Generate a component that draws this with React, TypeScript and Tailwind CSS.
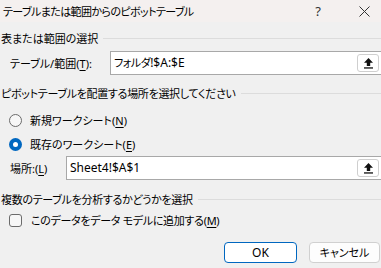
import React from 'react';

const FONT = "[font-family:'Noto_Sans','Noto_Sans_CJK_JP',sans-serif] [font-feature-settings:'palt']";

/** Up-arrow "collapse dialog" button that sits at the right end of a range box */
function RangeButton() {
  return (
    <div className="flex h-[18px] w-[22px] items-center justify-center rounded-[3px] border border-[#cfcfcf] bg-white">
      <svg width="11" height="12" viewBox="0 0 11 12">
        <path d="M5.5 1 L10 5.8 H7.2 V9 H3.8 V5.8 H1 Z" fill="#111" />
        <rect x="1" y="10.3" width="9" height="1.3" fill="#111" />
      </svg>
    </div>
  );
}

function RangeInput({ children }: { children: React.ReactNode }) {
  return (
    <div className="-mr-[4px] flex h-[24px] flex-1 items-center border border-[#a8a8a8] bg-white pl-[3px] pr-[5px]">
      <span className="flex-1 text-[12px] leading-none text-black">{children}</span>
      <RangeButton />
    </div>
  );
}

function SectionHeader({ children, tight }: { children: React.ReactNode; tight?: boolean }) {
  return (
    <div className="flex h-[16px] items-center">
      <span className={`pl-[1px] text-[11px] leading-none text-black ${tight ? 'tracking-[-0.3px]' : ''}`}>
        {children}
      </span>
      <div className="ml-[5px] h-px flex-1 bg-[#dcdcdc]" />
    </div>
  );
}

function Radio({ checked }: { checked?: boolean }) {
  if (checked) {
    return (
      <div className="flex h-[13px] w-[13px] items-center justify-center rounded-full bg-[#0067c0]">
        <div className="h-[5px] w-[5px] rounded-full bg-white" />
      </div>
    );
  }
  return <div className="h-[13px] w-[13px] rounded-full border border-[#6b6b6b] bg-[#f7f7f7]" />;
}

export default function App() {
  return (
    <div className={`h-[268px] w-[381px] overflow-hidden bg-[#f0f0f0] text-black ${FONT}`}>
      {/* Title bar */}
      <div className="flex h-[22px] items-center bg-[#f4f0ef] pl-[3px]">
        <span className="flex-1 text-[11px] leading-none tracking-[-0.6px] text-black">
          テーブルまたは範囲からのピボットテーブル
        </span>
        <span className="mr-[38px] text-[13px] leading-none text-[#333]">?</span>
        <svg width="11" height="11" viewBox="0 0 11 11" className="mr-[11px]">
          <path d="M0.5 0.5 L10.5 10.5 M10.5 0.5 L0.5 10.5" stroke="#333" strokeWidth="1" />
        </svg>
      </div>

      {/* Section 1 */}
      <div className="mt-[8px]">
        <SectionHeader>表または範囲の選択</SectionHeader>
      </div>
      <div className="mt-[5px] flex items-center pl-[10px]">
        <span className="w-[100px] text-[11px] leading-none">
          テーブル/範囲(<span className="underline underline-offset-2">T</span>):
        </span>
        <RangeInput>
          <span className="text-[11px] tracking-[-0.5px]">フォルダ</span>!$A:$E
        </RangeInput>
      </div>

      {/* Section 2 */}
      <div className="mt-[10px]">
        <SectionHeader tight>ピボットテーブルを配置する場所を選択してください</SectionHeader>
      </div>
      <div className="mt-[11px] flex h-[16px] items-center gap-[8px] pl-[9px]">
        <Radio />
        <span className="text-[11px] leading-none">
          新規ワークシート(<span className="underline underline-offset-2">N</span>)
        </span>
      </div>
      <div className="mt-[8px] flex h-[16px] items-center gap-[8px] pl-[9px]">
        <Radio checked />
        <span className="text-[11px] leading-none">
          既存のワークシート(<span className="underline underline-offset-2">E</span>)
        </span>
      </div>
      <div className="mt-[4px] flex items-center pl-[10px]">
        <span className="w-[56px] text-[11px] leading-none">
          場所:(<span className="underline underline-offset-2">L</span>)
        </span>
        <RangeInput>Sheet4!$A$1</RangeInput>
      </div>

      {/* Section 3 */}
      <div className="mt-[11px]">
        <SectionHeader tight>複数のテーブルを分析するかどうかを選択</SectionHeader>
      </div>
      <div className="mt-[5px] flex h-[16px] items-center gap-[9px] pl-[9px]">
        <div className="h-[13px] w-[13px] rounded-[3px] border border-[#6b6b6b] bg-[#f7f7f7]" />
        <span className="text-[11px] leading-none tracking-[-0.3px]">
          このデータをデータ モデルに追加する(<span className="underline underline-offset-2">M</span>)
        </span>
      </div>

      {/* Buttons */}
      <div className="mt-[14px] flex justify-end gap-[12px] pr-[1px]">
        <button className="flex h-[21px] w-[73px] items-center justify-center rounded-[4px] border border-[#0067c0] bg-white text-[12px] leading-none text-black">
          OK
        </button>
        <button className="flex h-[21px] w-[71px] items-center justify-center rounded-[4px] border border-[#d0d0d0] bg-[#fdfdfd] text-[11px] leading-none text-black">
          キャンセル
        </button>
      </div>
    </div>
  );
}
